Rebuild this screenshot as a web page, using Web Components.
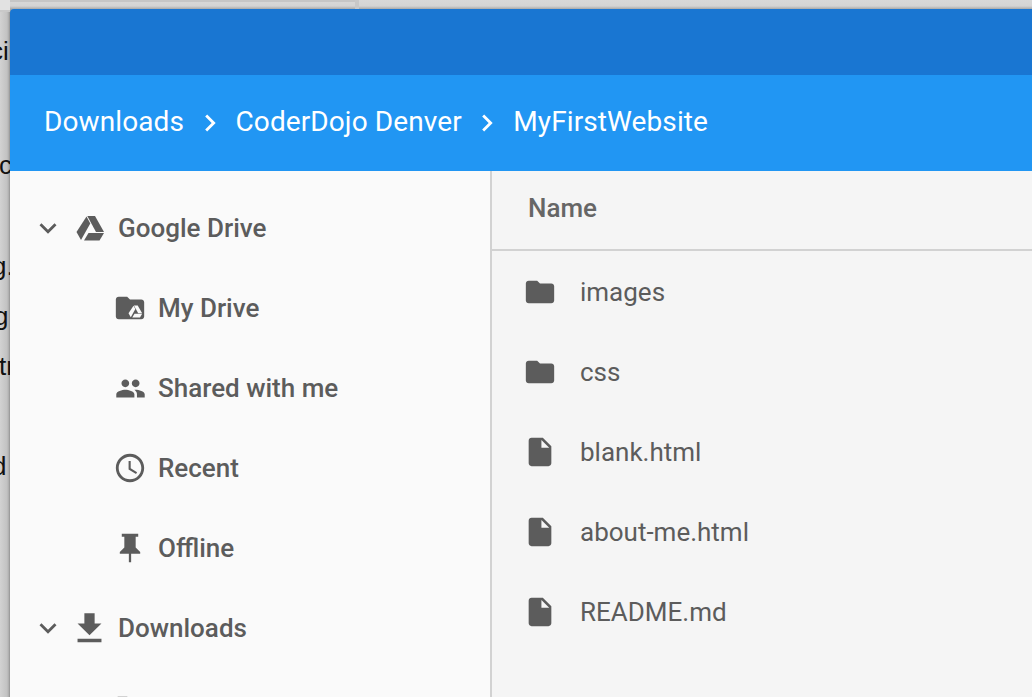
<!DOCTYPE html>
<html>
<head>
<meta charset="utf-8">
<title>Files</title>
<style>
html, body { margin: 0; height: 100%; overflow: hidden; }
body { font-family: Roboto, "Liberation Sans", sans-serif; }
</style>
</head>
<body>
<app-desktop>
  <files-window>
    <bread-crumbs slot="header">
      <span>Downloads</span>
      <span>CoderDojo Denver</span>
      <span>MyFirstWebsite</span>
    </bread-crumbs>
    <side-nav slot="nav">
      <nav-item icon="drive" expandable>Google Drive</nav-item>
      <nav-item icon="mydrive" nested>My Drive</nav-item>
      <nav-item icon="people" nested>Shared with me</nav-item>
      <nav-item icon="clock" nested>Recent</nav-item>
      <nav-item icon="pin" nested>Offline</nav-item>
      <nav-item icon="download" expandable>Downloads</nav-item>
      <nav-item icon="folder" nested></nav-item>
    </side-nav>
    <file-list slot="main">
      <file-row icon="folder">images</file-row>
      <file-row icon="folder">css</file-row>
      <file-row icon="file">blank.html</file-row>
      <file-row icon="file">about-me.html</file-row>
      <file-row icon="file">README.md</file-row>
    </file-list>
  </files-window>
</app-desktop>

<script>
// all icon shapes, drawn on a 24 box unless they say otherwise
const ICONS = {
  chevronDown: '<path d="M16.59 8.59L12 13.17 7.41 8.59 6 10l6 6 6-6z"/>',
  chevronRight: '<path d="M10 6L8.59 7.41 13.17 12l-4.58 4.59L10 18l6-6z"/>',
  folder: '<path d="M10 4H4c-1.1 0-2 .9-2 2v12c0 1.1.9 2 2 2h16c1.1 0 2-.9 2-2V8c0-1.1-.9-2-2-2h-8l-2-2z"/>',
  file: '<path d="M6 2c-1.1 0-2 .9-2 2v16c0 1.1.9 2 2 2h12c1.1 0 2-.9 2-2V8l-6-6H6zm7 7V3.5L18.5 9H13z"/>',
  people: '<path d="M16 11c1.66 0 2.99-1.34 2.99-3S17.66 5 16 5c-1.66 0-3 1.34-3 3s1.34 3 3 3zm-8 0c1.66 0 2.99-1.34 2.99-3S9.66 5 8 5C6.34 5 5 6.34 5 8s1.34 3 3 3zm0 2c-2.33 0-7 1.17-7 3.5V19h14v-2.5c0-2.33-4.67-3.5-7-3.5zm8 0c-.29 0-.62.02-.97.05 1.16.84 1.97 1.97 1.97 3.45V19h6v-2.5c0-2.33-4.67-3.5-7-3.5z"/>',
  clock: '<path d="M11.99 2C6.47 2 2 6.48 2 12s4.47 10 9.99 10C17.52 22 22 17.52 22 12S17.52 2 11.99 2zM12 20c-4.42 0-8-3.58-8-8s3.58-8 8-8 8 3.58 8 8-3.58 8-8 8zm.5-13H11v6l5.25 3.15.75-1.23-4.5-2.67z"/>',
  pin: '<path d="M6.2 2h11.6v2H16v7.6l3.2 3.2V16h-6.4v6h-1.6v-6H4.8v-1.2L8 11.6V4H6.2z"/>',
  download: '<path d="M19 9h-4V3H9v6H5l7 7 7-7zM5 18v2h14v-2H5z"/>',
  // the drive mark, 28 wide
  drive: '<path d="M11.3 1H19l9 16h-8z"/><path d="M10.5 1.5l3.8 7L5 25l-4.5-8z"/><path d="M12.5 18H28l-4.5 7.5H8z"/>',
  mydrive: '<path d="M10 4H4c-1.1 0-2 .9-2 2v12c0 1.1.9 2 2 2h16c1.1 0 2-.9 2-2V8c0-1.1-.9-2-2-2h-8l-2-2z"/>' +
    '<g fill="#fafafa" transform="translate(10.8 9.8) scale(.35)"><path d="M11.3 1H19l9 16h-8z"/><path d="M10.5 1.5l3.8 7L5 25l-4.5-8z"/><path d="M12.5 18H28l-4.5 7.5H8z"/></g>'
}

/**
 * One icon from the table above.
 */
customElements.define('app-icon', class extends HTMLElement {
  connectedCallback () {
    if (this.shadowRoot) return
    const name = this.getAttribute('name')
    const size = this.getAttribute('size') || 34
    const box = name === 'drive' ? '0 0 28 26' : '0 0 24 24'
    const width = name === 'drive' ? 28 : size
    const height = name === 'drive' ? 26 : size
    this.attachShadow({ mode: 'open' }).innerHTML = `
      <style>
        :host { display: block; flex: none; line-height: 0; }
        svg { display: block; fill: currentColor; }
      </style>
      <svg width="${width}" height="${height}" viewBox="${box}">${ICONS[name]}</svg>`
  }
})

/**
 * The page behind the window, only its edge shows.
 */
const desktopTemplate = document.createElement('template')
desktopTemplate.innerHTML = `
<style>
:host {
  display: block;
  position: relative;
  width: 100%;
  height: 100%;
  overflow: hidden;
  background: linear-gradient(to bottom, #d8d8d8 0, #d4d4d4 6px, #a8a8a8 9px);
}
#tab {
  position: absolute;
  left: 0;
  top: 0;
  width: 355px;
  height: 2px;
  background: #c6c6c6;
}
#split {
  position: absolute;
  left: 355px;
  top: 0;
  width: 4px;
  height: 9px;
  background: #c8c8c8;
}
#corner {
  position: absolute;
  left: 0;
  top: 0;
  width: 10px;
  height: 10px;
  background: #e2e2e2;
  border-bottom: 2px solid #c9c9c9;
}
#behind {
  position: absolute;
  left: 0;
  top: 12px;
  width: 10px;
  bottom: 0;
  overflow: hidden;
  background: linear-gradient(to right, #d2d2d2, #c2c2c2 70%, #aaa 90%, #8e8e8e);
  font: 26px "Liberation Sans", sans-serif;
  color: #111;
}
#behind span { position: absolute; line-height: 30px; }
#window { padding: 9px 0 0 10px; height: 100%; box-sizing: border-box; }
</style>
<div id="tab"></div>
<div id="split"></div>
<div id="corner"></div>
<div id="behind">
  <span style="top:24px;left:-10px">ci</span>
  <span style="top:138px;left:-1px">c</span>
  <span style="top:239px;left:-8px">g.</span>
  <span style="top:289px;left:-6px">g</span>
  <span style="top:339px;left:-1px">tr</span>
  <span style="top:439px;left:-8px">d</span>
</div>
<div id="window"><slot></slot></div>
`
customElements.define('app-desktop', class extends HTMLElement {
  constructor () {
    super()
    this.attachShadow({ mode: 'open' })
      .appendChild(desktopTemplate.content.cloneNode(true))
  }
})

const windowTemplate = document.createElement('template')
windowTemplate.innerHTML = `
<style>
:host {
  display: flex;
  flex-direction: column;
  position: relative;
  width: 1100px;
  height: 760px;
  border-radius: 4px 0 0 0;
  overflow: hidden;
}
#title { height: 66px; flex: none; background: #1976d2; }
#body { display: flex; flex: 1; min-height: 0; }
</style>
<div id="title"></div>
<slot name="header"></slot>
<div id="body">
  <slot name="nav"></slot>
  <slot name="main"></slot>
</div>
`
customElements.define('files-window', class extends HTMLElement {
  constructor () {
    super()
    this.attachShadow({ mode: 'open' })
      .appendChild(windowTemplate.content.cloneNode(true))
  }
})

/**
 * Blue bar with the path, puts a chevron between the parts.
 */
const crumbsTemplate = document.createElement('template')
crumbsTemplate.innerHTML = `
<style>
:host {
  display: flex;
  align-items: center;
  height: 96px;
  flex: none;
  box-sizing: border-box;
  padding: 0 0 4px 34px;
  background: #2196f3;
  color: #fff;
  font-size: 28px;
  letter-spacing: .1px;
  white-space: nowrap;
}
::slotted(span) { display: block; }
::slotted(app-icon) { margin: 4px 9px 0 8.5px; }
</style>
<slot></slot>
`
customElements.define('bread-crumbs', class extends HTMLElement {
  constructor () {
    super()
    this.attachShadow({ mode: 'open' })
      .appendChild(crumbsTemplate.content.cloneNode(true))
  }

  connectedCallback () {
    Array.from(this.querySelectorAll('span')).slice(1).forEach(part => {
      const icon = document.createElement('app-icon')
      icon.setAttribute('name', 'chevronRight')
      this.insertBefore(icon, part)
    })
  }
})

const sideTemplate = document.createElement('template')
sideTemplate.innerHTML = `
<style>
:host {
  display: block;
  flex: none;
  width: 482px;
  box-sizing: border-box;
  padding-top: 17px;
  background: #fafafa;
  border-right: 2px solid #d2d2d2;
}
</style>
<slot></slot>
`
customElements.define('side-nav', class extends HTMLElement {
  constructor () {
    super()
    this.attachShadow({ mode: 'open' })
      .appendChild(sideTemplate.content.cloneNode(true))
  }
})

/**
 * A row of the side bar. expandable rows get a chevron, nested ones sit further in.
 */
customElements.define('nav-item', class extends HTMLElement {
  constructor () {
    super()
    const nested = this.hasAttribute('nested')
    const name = this.getAttribute('icon')
    let lead = ''
    if (this.hasAttribute('expandable')) {
      lead = '<app-icon name="chevronDown" style="margin-right:11px"></app-icon>'
    }
    let extra = 'style="margin-right:11px"'
    if (name === 'drive') extra = 'style="margin-right:14px"'
    if (name === 'download') extra = 'size="41" style="margin:0 8px 0 -7px"'
    if (name === 'people') extra = 'size="31" style="margin:0 12.5px 0 1.5px"'
    this.attachShadow({ mode: 'open' }).innerHTML = `
      <style>
        :host {
          display: flex;
          align-items: center;
          height: 80px;
          box-sizing: border-box;
          padding-left: ${nested ? 103 : 21}px;
          color: #5c5c5c;
          font-size: 26px;
          font-weight: 500;
          white-space: nowrap;
        }
      </style>
      ${lead}<app-icon name="${name}" ${extra}></app-icon><slot></slot>`
  }
})

const listTemplate = document.createElement('template')
listTemplate.innerHTML = `
<style>
:host {
  display: block;
  flex: 1;
  background: #f5f5f5;
}
#head {
  display: flex;
  align-items: center;
  height: 80px;
  box-sizing: border-box;
  padding: 0 0 4px 36px;
  border-bottom: 2px solid #d2d2d2;
  color: #666;
  font-size: 26px;
  font-weight: 500;
}
</style>
<div id="head">Name</div>
<slot></slot>
`
customElements.define('file-list', class extends HTMLElement {
  constructor () {
    super()
    this.attachShadow({ mode: 'open' })
      .appendChild(listTemplate.content.cloneNode(true))
  }
})

customElements.define('file-row', class extends HTMLElement {
  constructor () {
    super()
    this.attachShadow({ mode: 'open' }).innerHTML = `
      <style>
        :host {
          display: flex;
          align-items: center;
          height: 80px;
          box-sizing: border-box;
          padding: 2px 0 0 31px;
          color: #5c5c5c;
          font-size: 26px;
        }
        app-icon { margin-right: 23px; }
      </style>
      <app-icon name="${this.getAttribute('icon')}"></app-icon><slot></slot>`
  }
})
</script>
</body>
</html>
